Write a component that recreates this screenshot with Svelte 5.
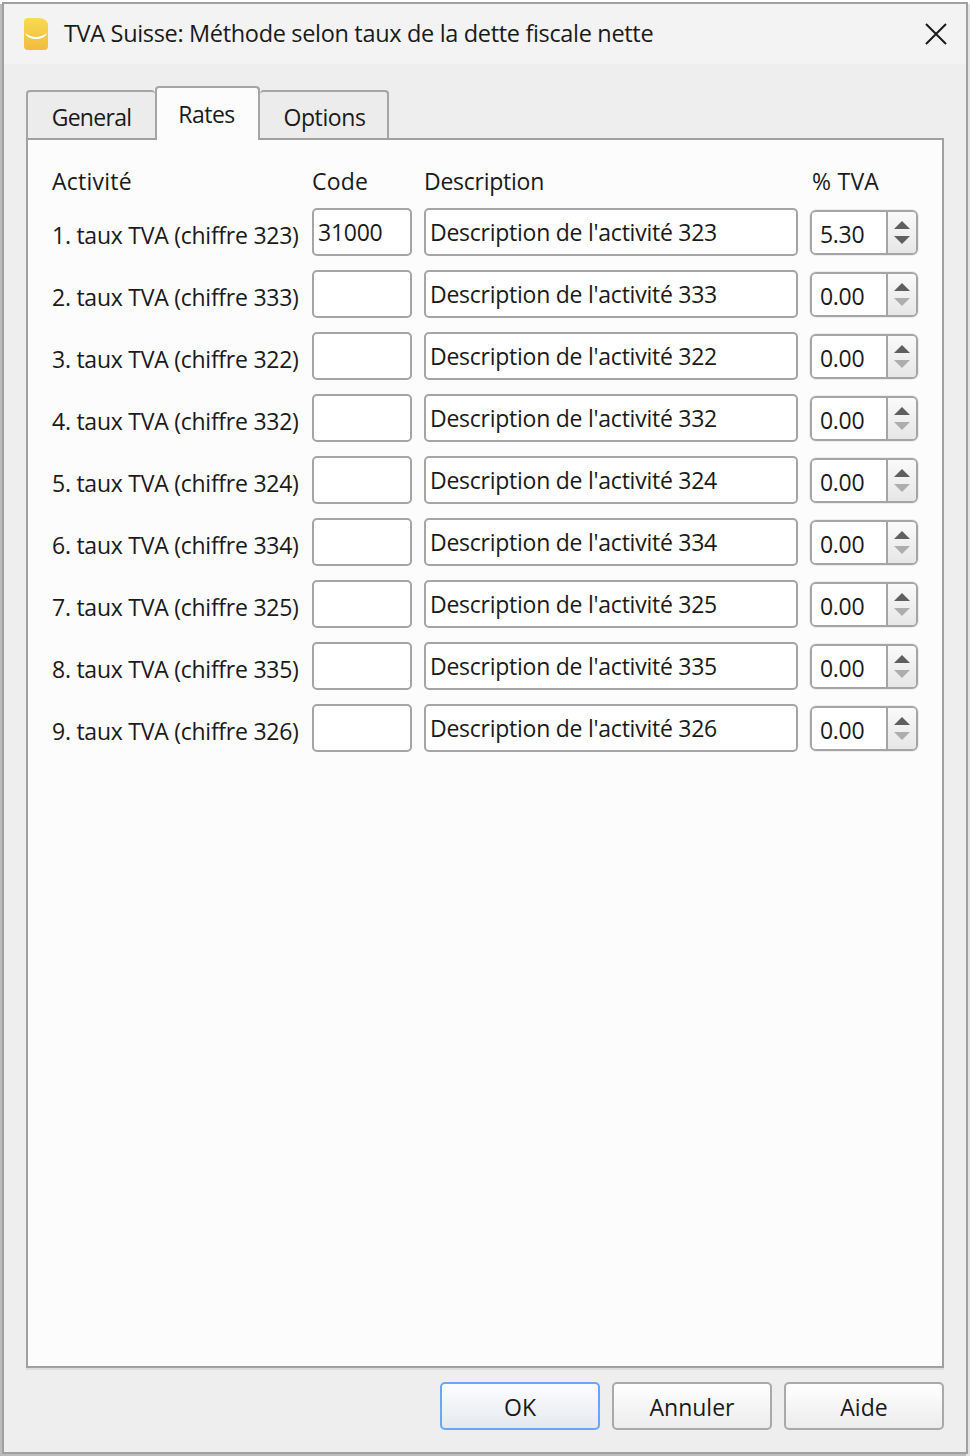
<script>
  const rows = [
    { n: 1, chiffre: 323, code: "31000", rate: "5.30" },
    { n: 2, chiffre: 333, code: "", rate: "0.00" },
    { n: 3, chiffre: 322, code: "", rate: "0.00" },
    { n: 4, chiffre: 332, code: "", rate: "0.00" },
    { n: 5, chiffre: 324, code: "", rate: "0.00" },
    { n: 6, chiffre: 334, code: "", rate: "0.00" },
    { n: 7, chiffre: 325, code: "", rate: "0.00" },
    { n: 8, chiffre: 335, code: "", rate: "0.00" },
    { n: 9, chiffre: 326, code: "", rate: "0.00" }
  ];
</script>

<div class="window">
  <header class="titlebar">
    <svg class="app-icon" width="24" height="32" viewBox="0 0 24 32">
      <defs>
        <linearGradient id="coin" x1="0" y1="0" x2="0" y2="1">
          <stop offset="0" stop-color="#f9da50" />
          <stop offset="1" stop-color="#f2bb3e" />
        </linearGradient>
      </defs>
      <path d="M0 4q0-4 4-4h10q10 0 10 8v20q0 4-4 4H4q-4 0-4-4z" fill="url(#coin)" />
      <path d="M1 15q11 8 22 0q-1 3-4 4.500q-7 3-14 0q-3-1.500-4-4.500z" fill="#fff" />
    </svg>
    <span class="title">TVA Suisse: Méthode selon taux de la dette fiscale nette</span>
    <svg class="close" width="22" height="22" viewBox="0 0 22 22">
      <path d="M1 1l20 20M21 1L1 21" stroke="#1a1a1a" stroke-width="2" fill="none" />
    </svg>
  </header>

  <div class="body">
    <div class="tabs">
      <div class="tab first">General</div>
      <div class="tab active">Rates</div>
      <div class="tab last">Options</div>
    </div>

    <div class="panel">
      <div class="grid">
        <div class="head">Activité</div>
        <div class="head code">Code</div>
        <div class="head desc">Description</div>
        <div class="head rate">% TVA</div>

        {#each rows as row}
          <div class="label">{row.n}. taux TVA (chiffre {row.chiffre})</div>
          <input class="field" type="text" value={row.code} />
          <input class="field" type="text" value={"Description de l'activité " + row.chiffre} />
          <div class="spin">
            <input class="spin-input" type="text" value={row.rate} />
            <div class="arrows">
              <span class="up"></span>
              <span class="down" class:off={row.rate === "0.00"}></span>
            </div>
          </div>
        {/each}
      </div>
    </div>

    <div class="buttons">
      <button class="btn default">OK</button>
      <button class="btn">Annuler</button>
      <button class="btn">Aide</button>
    </div>
  </div>
</div>

<style>
  :global(body) {
    background: #fff;
    min-height: 1456px;
  }

  .window {
    box-sizing: border-box;
    width: 966px;
    height: 1452px;
    margin: 2px 0 0 2px;
    border: 2px solid #a0a0a0;
    box-shadow: -2px 2px 0 #bcbcbc, 2px 2px 0 #e4e4e4;
    background: #eeeeee;
    display: flex;
    flex-direction: column;
    font-family: "Open Sans", "Noto Sans", sans-serif;
    font-size: 23px;
    color: #1a1a1a;
  }

  .titlebar {
    height: 60px;
    flex: none;
    background: #f3f3f3;
    display: flex;
    align-items: center;
    padding-left: 20px;
    padding-right: 19px;
    gap: 16px;
  }

  .app-icon {
    flex: none;
  }

  .title {
    flex: 1;
    font-size: 23.5px;
    letter-spacing: -0.33px;
    padding-bottom: 2px;
  }

  .close {
    flex: none;
  }

  .body {
    flex: 1;
    display: flex;
    flex-direction: column;
    padding: 0 22px;
  }

  .tabs {
    display: flex;
    align-items: flex-end;
    height: 74px;
    flex: none;
    position: relative;
    z-index: 1;
  }

  .tab {
    box-sizing: border-box;
    height: 48px;
    padding-top: 4px;
    display: flex;
    align-items: center;
    justify-content: center;
    background: #ececec;
    border: 2px solid #a5a5a5;
    border-bottom: none;
    border-radius: 4px 4px 0 0;
    letter-spacing: -0.4px;
  }

  .tab.first {
    width: 129px;
    border-right: none;
    letter-spacing: -0.7px;
  }

  .tab.last {
    width: 129px;
    border-left: none;
    padding-left: 2px;
  }

  .tab.active {
    background: #fcfcfc;
    height: 54px;
    width: 105px;
    padding: 0 2px 1px 0;
    margin-bottom: -2px;
    letter-spacing: -0.5px;
  }

  .panel {
    box-sizing: border-box;
    height: 1230px;
    flex: none;
    background: #fcfcfc;
    border: 2px solid #a0a0a0;
    padding: 28px 24px 0;
    box-shadow: 0 2px 0 #dddddd;
  }

  .grid {
    display: grid;
    grid-template-columns: 248px 100px 374px 108px;
    column-gap: 12px;
    row-gap: 14px;
    grid-auto-rows: 48px;
    grid-template-rows: 26px;
  }

  .head {
    line-height: 26px;
    letter-spacing: 0.25px;
  }

  .head.code {
    letter-spacing: 0.2px;
  }

  .head.desc {
    letter-spacing: -0.25px;
  }

  .head.rate {
    padding-left: 2px;
  }

  .label {
    display: flex;
    align-items: center;
    padding-top: 6px;
    box-sizing: border-box;
    white-space: nowrap;
    letter-spacing: -0.25px;
  }

  .field {
    box-sizing: border-box;
    width: 100%;
    height: 48px;
    border: 2px solid #a5a5a5;
    border-radius: 5px;
    background: #fff;
    padding: 0 0 0 4px;
    font: inherit;
    color: inherit;
    letter-spacing: -0.25px;
    outline: none;
  }

  .spin {
    box-sizing: border-box;
    height: 45px;
    margin-top: 2px;
    display: flex;
    border: 2px solid #a5a5a5;
    border-radius: 6px;
    background: #fff;
    box-shadow: 0 0 0 1px #ececec;
    overflow: hidden;
  }

  .spin-input {
    box-sizing: border-box;
    width: 76px;
    min-width: 0;
    border: none;
    border-right: 2px solid #a5a5a5;
    background: #fff;
    padding: 3px 0 0 8px;
    font: inherit;
    color: inherit;
    letter-spacing: -0.3px;
    outline: none;
  }

  .arrows {
    flex: 1;
    background: linear-gradient(#fafafa, #e6e6e6);
    display: flex;
    flex-direction: column;
    align-items: center;
    justify-content: center;
    gap: 7px;
  }

  .up,
  .down {
    width: 0;
    height: 0;
    border-left: 8px solid transparent;
    border-right: 8px solid transparent;
  }

  .up {
    border-bottom: 8px solid #5f5f5f;
  }

  .down {
    border-top: 8px solid #5f5f5f;
  }

  .down.off {
    border-top-color: #adadad;
  }

  .buttons {
    display: flex;
    justify-content: flex-end;
    gap: 12px;
    margin-top: 14px;
  }

  .btn {
    box-sizing: border-box;
    width: 160px;
    height: 48px;
    border: 2px solid #a9a9a9;
    border-radius: 5px;
    background: linear-gradient(#ffffff, #ececec);
    font: inherit;
    color: inherit;
    padding: 2px 0 0;
  }

  .btn.default {
    border-color: #66a6fb;
    background: linear-gradient(#fcfdff, #e5e9ee);
  }
</style>
